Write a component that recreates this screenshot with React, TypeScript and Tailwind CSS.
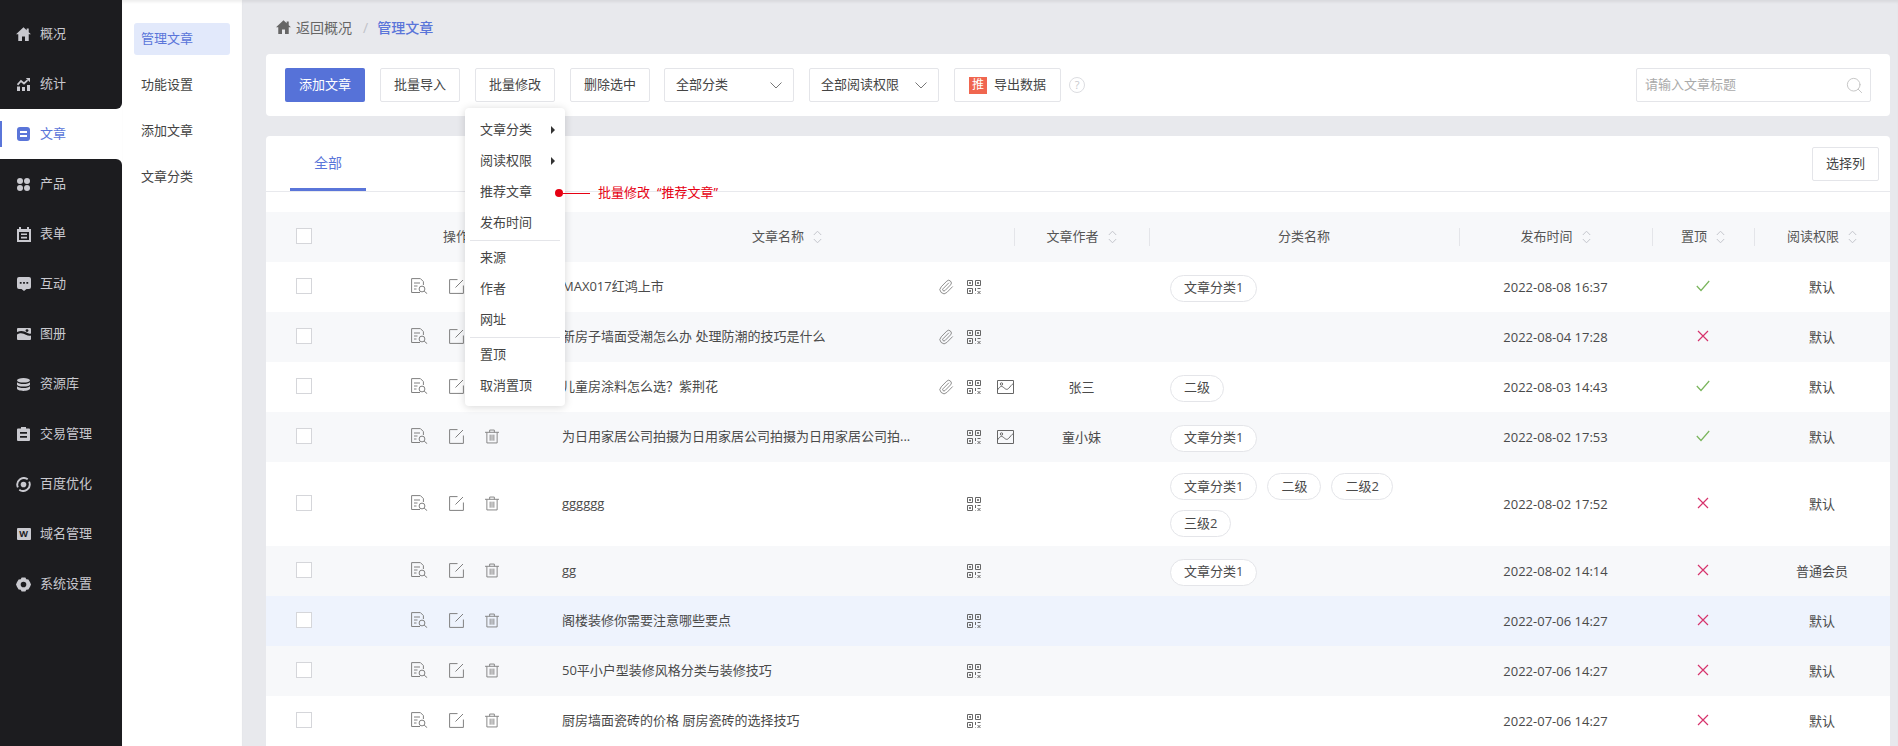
import { ReactNode } from 'react';
import { Paperclip, Search } from 'lucide-react';

const FONT = '[font-family:"Open_Sans","Noto_Sans_CJK_SC",sans-serif]';

type Row = {
  name: string;
  clip?: boolean;
  pic?: boolean;
  author?: string;
  tags?: string[];
  time: string;
  top: boolean;
  perm: string;
  bg: string;
  tall?: boolean;
};

const rows: Row[] = [
  { name: 'MAX017红鸿上市', clip: true, tags: ['文章分类1'], time: '2022-08-08 16:37', top: true, perm: '默认', bg: 'bg-white' },
  { name: '新房子墙面受潮怎么办 处理防潮的技巧是什么', clip: true, time: '2022-08-04 17:28', top: false, perm: '默认', bg: 'bg-[#f7f8fa]' },
  { name: '儿童房涂料怎么选？紫荆花', clip: true, pic: true, author: '张三', tags: ['二级'], time: '2022-08-03 14:43', top: true, perm: '默认', bg: 'bg-white' },
  { name: '为日用家居公司拍摄为日用家居公司拍摄为日用家居公司拍...', pic: true, author: '童小妹', tags: ['文章分类1'], time: '2022-08-02 17:53', top: true, perm: '默认', bg: 'bg-[#f7f8fa]' },
  { name: 'gggggg', tags: ['文章分类1', '二级', '二级2', '三级2'], time: '2022-08-02 17:52', top: false, perm: '默认', bg: 'bg-white', tall: true },
  { name: 'gg', tags: ['文章分类1'], time: '2022-08-02 14:14', top: false, perm: '普通会员', bg: 'bg-[#f7f8fa]' },
  { name: '阁楼装修你需要注意哪些要点', time: '2022-07-06 14:27', top: false, perm: '默认', bg: 'bg-[#eef3fd]' },
  { name: '50平小户型装修风格分类与装修技巧', time: '2022-07-06 14:27', top: false, perm: '默认', bg: 'bg-[#f7f8fa]' },
  { name: '厨房墙面瓷砖的价格 厨房瓷砖的选择技巧', time: '2022-07-06 14:27', top: false, perm: '默认', bg: 'bg-white' },
];

const Home = ({ className }: { className?: string }) => (
  <svg viewBox="0 0 16 15" className={className} fill="currentColor">
    <path d="M8 .4 0 7.800h2.400V15h4v-4.800h3.200V15h4V7.800H16l-2.400-2.200V1.500h-2.200v2.100z" />
  </svg>
);

const navTop = [
  {
    label: '概况',
    icon: <Home className="w-[15px] h-[14px]" />,
  },
  {
    label: '统计',
    icon: (
      <svg viewBox="0 0 13 13" className="w-[13px] h-[13px]" fill="currentColor">
        <path d="M0 8.500h3V13H0zM5 9h3v4H5zM10 7h3v6h-3z" />
        <path d="M.5 6.800 4 3l3 2.500 3.600-3.300" fill="none" stroke="currentColor" strokeWidth="1.700" />
        <path d="M8.800 0H13v4.200z" />
      </svg>
    ),
  },
];

const navBottom = [
  {
    label: '产品',
    icon: (
      <svg viewBox="0 0 13 13" className="w-[13px] h-[13px]" fill="currentColor">
        <circle cx="3" cy="3" r="3" />
        <circle cx="10" cy="3" r="3" />
        <circle cx="3" cy="10" r="3" />
        <circle cx="10" cy="10" r="3" />
      </svg>
    ),
  },
  {
    label: '表单',
    icon: (
      <svg viewBox="0 0 14 15" className="w-[14px] h-[15px]" fill="currentColor">
        <path d="M2 0h2v2h6V0h2v2h2v13H0V2h2zM2 5v8h10V5zM4 6.500h6v1.600H4zM4 9.800h6v1.600H4z" fillRule="evenodd" />
      </svg>
    ),
  },
  {
    label: '互动',
    icon: (
      <svg viewBox="0 0 14 14" className="w-[14px] h-[14px]" fill="currentColor">
        <path
          d="M2 0h10a2 2 0 0 1 2 2v8a2 2 0 0 1-2 2H9.500L7 14l-2.500-2H2a2 2 0 0 1-2-2V2a2 2 0 0 1 2-2zM2.800 5v1.800h1.800V5zm3.300 0v1.800h1.800V5zm3.300 0v1.800h1.800V5z"
          fillRule="evenodd"
        />
      </svg>
    ),
  },
  {
    label: '图册',
    icon: (
      <svg viewBox="0 0 14 12" className="w-[14px] h-3" fill="currentColor">
        <path d="M1 0h12a1 1 0 0 1 1 1v4.500c-1.800.5-3 0-4.400-.9C7.500 3.200 4 2 0 4.100V1a1 1 0 0 1 1-1z" />
        <path d="M0 6.400c3.500-2.200 6.500-1 8.800.3 1.800 1 3.500 1.400 5.200.9V11a1 1 0 0 1-1 1H1a1 1 0 0 1-1-1z" />
        <circle cx="10" cy="2.600" r="1.400" fill="#1c1c1f" />
      </svg>
    ),
  },
  {
    label: '资源库',
    icon: (
      <svg viewBox="0 0 13 13" className="w-[13px] h-[13px]" fill="currentColor">
        <ellipse cx="6.500" cy="2.300" rx="6.500" ry="2.300" />
        <path d="M0 4.200c1 1.200 3.300 1.800 6.500 1.800S12 5.400 13 4.200v2.300C13 7.700 10.100 8.600 6.500 8.600S0 7.700 0 6.500z" />
        <path d="M0 8.300c1 1.200 3.300 1.800 6.500 1.800S12 9.500 13 8.300v2.300c0 1.300-2.900 2.400-6.500 2.400S0 11.900 0 10.600z" />
      </svg>
    ),
  },
  {
    label: '交易管理',
    icon: (
      <svg viewBox="0 0 13 14" className="w-[13px] h-[14px]" fill="currentColor">
        <path
          d="M4 0h5v1.500h3a1 1 0 0 1 1 1V13a1 1 0 0 1-1 1H1a1 1 0 0 1-1-1V2.500a1 1 0 0 1 1-1h3zM3 5v1.800h7V5zm0 4v1.800h7V9z"
          fillRule="evenodd"
        />
      </svg>
    ),
  },
  {
    label: '百度优化',
    icon: (
      <svg viewBox="0 0 16 16" className="w-[15px] h-[15px]" fill="none" stroke="currentColor">
        <path d="M2 11A7 7 0 0 1 12.500 2.500" strokeWidth="2" />
        <path d="M14 5A7 7 0 0 1 3.500 13.500" strokeWidth="2" />
        <circle cx="8" cy="8" r="3" fill="currentColor" strokeWidth="0" />
      </svg>
    ),
  },
  {
    label: '域名管理',
    icon: (
      <span className="w-[14px] h-3 bg-[#c9c9cf] rounded-[1px] text-[#1c1c1f] text-[9px] font-bold leading-3 text-center">
        W
      </span>
    ),
  },
  {
    label: '系统设置',
    icon: (
      <svg viewBox="0 0 16 16" className="w-[15px] h-[15px]" fill="currentColor">
        <path
          d="M6 .5h4l1 2 2.200.2 1.800 3L16 8l-1 2.300-1.800 3-2.200.2-1 2H6l-1-2-2.200-.2-1.800-3L0 8l1-2.300 1.800-3L5 2.500zM8 5a3 3 0 1 0 0 6 3 3 0 0 0 0-6z"
          fillRule="evenodd"
        />
      </svg>
    ),
  },
];

const NavItem = ({ label, icon }: { label: string; icon: ReactNode }) => (
  <div className="h-[50px] flex items-center text-[#c9c9cf] text-[13px]">
    <span className="w-10 flex justify-center pl-[7px]">{icon}</span>
    <span>{label}</span>
  </div>
);

const SortIcon = () => (
  <svg viewBox="0 0 9 14" className="w-[9px] h-[14px] text-[#c4c6cc]" fill="none" stroke="currentColor" strokeWidth="1">
    <path d="M.8 5 4.500 1.200 8.200 5M.8 9l3.700 3.800L8.200 9" />
  </svg>
);

const Chevron = () => (
  <svg viewBox="0 0 12 7" className="w-3 h-[7px] text-[#777]" fill="none" stroke="currentColor" strokeWidth="1">
    <path d="M.5.5 6 6l5.500-5.500" />
  </svg>
);

const Btn = ({ children, className }: { children: ReactNode; className?: string }) => (
  <div
    className={`h-[34px] flex items-center justify-center rounded-[2px] border border-[#e4e5e9] bg-white text-[13px] text-[#444] ${className ?? ''}`}
  >
    {children}
  </div>
);

const Select = ({ label }: { label: string }) => (
  <Btn className="w-[130px] !justify-between pl-[11px] pr-[11px]">
    <span>{label}</span>
    <Chevron />
  </Btn>
);

const Th = ({ label, className }: { label: string; className: string }) => (
  <div className={`flex items-center gap-[9px] ${className}`}>
    <span>{label}</span>
    <SortIcon />
  </div>
);

const Divider = () => <span className="absolute left-0 top-[16px] h-[18px] w-px bg-[#e4e5e9]" />;

const DocSearch = () => (
  <svg viewBox="0 0 17 16" className="w-[17px] h-4" fill="none" stroke="#808080" strokeWidth="1">
    <path d="M9 14.500H.6V.6h8.800l3 3v3.400M3 5h6M3 8h3.500M3 11h2.500" />
    <circle cx="11" cy="11" r="2.900" />
    <path d="m13.200 13.200 3 2.500" />
  </svg>
);

const EditIcon = () => (
  <svg viewBox="0 0 15 15" className="w-[15px] h-[15px]" fill="none" stroke="#808080" strokeWidth="1">
    <path d="M8.500.6H.6v13.800h13.800V6.500M14 1 6.500 8.500" />
  </svg>
);

const TrashIcon = () => (
  <svg viewBox="0 0 15 15" className="w-[14px] h-[15px]" fill="none" stroke="#808080" strokeWidth="1">
    <path d="M0 3h15M5 3V.6h5V3M2 3v11.400h11V3M5.500 5.500v6.500M7.500 5.500v6.500M9.500 5.500v6.500" />
  </svg>
);

const QrIcon = () => (
  <svg viewBox="0 0 14 14" className="w-[14px] h-[14px]" fill="none" stroke="#666" strokeWidth="1">
    <path d="M.5.500h5v5h-5zM8.500.500h5v5h-5zM.5 8.500h5v5h-5z" />
    <path d="M2.500 2.500h1v1h-1zM10.500 2.500h1v1h-1zM2.500 10.500h1v1h-1z" fill="#666" />
    <path d="M8.500 8v3M8.500 13.500v.5M10.500 8.500h3M10.500 11l3 3M13.500 11l-3 3" />
  </svg>
);

const ImgIcon = () => (
  <svg viewBox="0 0 17 14" className="w-[17px] h-[14px]" fill="none" stroke="#666" strokeWidth="1">
    <path d="M.5.500h16v13H.5z" />
    <path d="M.5 10c2-3 3.500-4.500 5.500-3s3.500 3.500 5.500 1.500 3-4 5-5" />
    <circle cx="4.500" cy="4" r="1.200" />
  </svg>
);

const MenuItem = ({ label, arrow }: { label: string; arrow?: boolean }) => (
  <div className="h-[31px] flex items-center justify-between pl-[15px] pr-[10px] text-[13px] text-[#444]">
    <span>{label}</span>
    {arrow && <span className="w-0 h-0 border-y-[4px] border-y-transparent border-l-[4px] border-l-[#333]" />}
  </div>
);

const MenuLine = () => <div className="mx-[5px] h-px bg-[#e4e5e9] my-[1.5px]" />;

export default function App() {
  return (
    <div className={`relative flex h-screen overflow-hidden bg-white ${FONT}`}>
      {/* main nav */}
      <div className="w-[122px] shrink-0 flex flex-col">
        <div className="h-[109px] bg-[#1c1c1f] rounded-br-[6px] pt-[9px]">
          {navTop.map((n) => (
            <NavItem key={n.label} {...n} />
          ))}
        </div>
        <div className="relative h-[50px] flex items-center text-[13px] text-[#5a75d9]">
          <span className="absolute left-0 top-[12px] h-[26px] w-[2px] bg-[#5a75d9]" />
          <span className="w-10 flex justify-center pl-[7px]">
            <span className="w-[13px] h-[14px] rounded-[3px] bg-[#5a75d9] flex flex-col justify-center gap-[2px] px-[3px]">
              <span className="h-[2px] bg-white" />
              <span className="h-[2px] bg-white" />
            </span>
          </span>
          <span>文章</span>
        </div>
        <div className="flex-1 bg-[#1c1c1f] rounded-tr-[6px]">
          {navBottom.map((n) => (
            <NavItem key={n.label} {...n} />
          ))}
        </div>
      </div>

      {/* sub nav */}
      <div className="w-[120px] shrink-0 pt-[23px] pl-[12px] flex flex-col gap-[14px] text-[13px] text-[#444] shadow-[inset_0_3px_3px_-1px_rgba(0,0,0,0.07)]">
        <div className="w-[96px] h-[32px] pl-[7px] flex items-center rounded-[3px] bg-[#e2e9fb] text-[#5a75d9]">管理文章</div>
        <div className="w-[96px] h-[32px] pl-[7px] flex items-center">功能设置</div>
        <div className="w-[96px] h-[32px] pl-[7px] flex items-center">添加文章</div>
        <div className="w-[96px] h-[32px] pl-[7px] flex items-center">文章分类</div>
      </div>

      {/* content */}
      <div className="flex-1 min-w-0 bg-[#e8e9ed] pl-[24px] pr-[8px] shadow-[inset_0_3px_3px_-1px_rgba(0,0,0,0.07)]">
        <div className="h-[54px] flex items-center text-[14px] text-[#666]">
          <Home className="w-[15px] h-[14px] ml-[10px] text-[#666]" />
          <span className="ml-[5px]">返回概况</span>
          <span className="ml-[11px] mr-[9px] text-[#c0c2c8]">/</span>
          <span className="text-[#5a75d9] font-medium">管理文章</span>
        </div>

        {/* toolbar */}
        <div className="h-[62px] bg-white rounded-[4px] flex items-center pl-[19px] pr-[19px]">
          <div className="h-[34px] w-[80px] flex items-center justify-center rounded-[2px] bg-[#5672d8] text-white text-[13px]">添加文章</div>
          <Btn className="w-[80px] ml-[15px]">批量导入</Btn>
          <Btn className="w-[80px] ml-[15px]">批量修改</Btn>
          <Btn className="w-[80px] ml-[15px]">删除选中</Btn>
          <div className="ml-[14px]">
            <Select label="全部分类" />
          </div>
          <div className="ml-[15px]">
            <Select label="全部阅读权限" />
          </div>
          <Btn className="w-[107px] ml-[15px] gap-[7px]">
            <span className="w-[18px] h-[17px] bg-[#f0664f] text-white text-[12px] flex items-center justify-center">推</span>
            <span>导出数据</span>
          </Btn>
          <span className="ml-[8px] w-4 h-4 rounded-full border border-[#dcdde1] text-[#c8c9ce] text-[11px] leading-[14px] text-center">?</span>
          <div className="ml-auto w-[235px] h-[34px] flex items-center justify-between rounded-[2px] border border-[#e4e5e9] pl-[8px] pr-[6px] text-[13px] text-[#aaa]">
            <span>请输入文章标题</span>
            <Search className="w-[19px] h-[19px] text-[#c4c4c4]" strokeWidth={1.2} />
          </div>
        </div>

        {/* table card */}
        <div className="mt-[20px] bg-white rounded-t-[4px] text-[13px] text-[#4a4a4a]">
          <div className="h-[56px] border-b border-[#e8e9ed] flex justify-between pl-[24px] pr-[11px]">
            <div className="w-[76px] h-[55px] flex items-center justify-center border-b-[3px] border-[#5a75d9] pt-[1px] text-[14px] text-[#5a75d9]">全部</div>
            <Btn className="w-[67px] mt-[11px]">选择列</Btn>
          </div>

          <div className="mt-[20px] h-[50px] bg-[#f7f8fa] flex items-center text-[#555]">
            <div className="w-[76px] flex justify-center pb-[2px]">
              <span className="w-4 h-4 border border-[#d5d6da] bg-white" />
            </div>
            <Th label="操作" className="w-[218px] pl-[101px]" />
            <Th label="文章名称" className="w-[454px] justify-center" />
            <div className="relative w-[135px] flex justify-center">
              <Divider />
              <Th label="文章作者" className="h-[50px]" />
            </div>
            <div className="relative w-[310px] h-[50px] flex items-center justify-center">
              <Divider />
              <span>分类名称</span>
            </div>
            <div className="relative w-[193px] flex justify-center">
              <Divider />
              <Th label="发布时间" className="h-[50px]" />
            </div>
            <div className="relative w-[102px] flex justify-center">
              <Divider />
              <Th label="置顶" className="h-[50px]" />
            </div>
            <div className="relative w-[136px] flex justify-center">
              <Divider />
              <Th label="阅读权限" className="h-[50px]" />
            </div>
          </div>

          {rows.map((r) => (
            <div key={r.name} className={`flex items-center ${r.bg} ${r.tall ? 'h-[84px]' : 'h-[50px]'}`}>
              <div className="w-[76px] flex justify-center pb-[2px]">
                <span className="w-4 h-4 border border-[#d5d6da] bg-white" />
              </div>
              <div className="w-[218px] pl-[69px] pb-[2px] flex items-center">
                <DocSearch />
                <span className="ml-[21px]">
                  <EditIcon />
                </span>
                <span className="ml-[21px]">
                  <TrashIcon />
                </span>
              </div>
              <div className="w-[454px] pl-[2px] flex items-center">
                <div className="w-[350px] whitespace-nowrap">{r.name}</div>
                <div className="w-[29px] ml-[27px] flex">{r.clip && <Paperclip className="w-4 h-4 text-[#666]" strokeWidth={1.1} />}</div>
                <div className="w-[30px]">
                  <QrIcon />
                </div>
                <div className="w-[17px]">{r.pic && <ImgIcon />}</div>
              </div>
              <div className="w-[135px] pt-[2px] text-center">{r.author}</div>
              <div className="w-[310px] pl-[21px] pt-[2px]">
                <div className="w-[280px] flex flex-wrap gap-x-[10px] gap-y-[10px]">
                  {r.tags?.map((t) => (
                    <span key={t} className="h-[27px] px-[13px] flex items-center rounded-full border border-[#e4e5e9] bg-white">
                      {t}
                    </span>
                  ))}
                </div>
              </div>
              <div className="w-[193px] pt-[2px] text-center">{r.time}</div>
              <div className="w-[102px] flex justify-center pb-[3px]">
                {r.top ? (
                  <svg viewBox="0 0 14 12" className="w-[14px] h-3" fill="none" stroke="#7ab55c" strokeWidth="1.200">
                    <path d="m.8 6 4.200 4.500L13.200 1" />
                  </svg>
                ) : (
                  <svg viewBox="0 0 12 12" className="w-3 h-3" fill="none" stroke="#d6336c" strokeWidth="1.200">
                    <path d="m1 1 10 10M11 1 1 11" />
                  </svg>
                )}
              </div>
              <div className="w-[136px] pt-[2px] text-center">{r.perm}</div>
            </div>
          ))}
        </div>
      </div>

      {/* batch edit menu */}
      <div className="absolute left-[465px] top-[108px] w-[100px] h-[298px] pt-[6px] bg-white rounded-[4px] shadow-[0_1px_8px_rgba(0,0,0,0.16)]">
        <MenuItem label="文章分类" arrow />
        <MenuItem label="阅读权限" arrow />
        <MenuItem label="推荐文章" />
        <MenuItem label="发布时间" />
        <MenuLine />
        <MenuItem label="来源" />
        <MenuItem label="作者" />
        <MenuItem label="网址" />
        <MenuLine />
        <MenuItem label="置顶" />
        <MenuItem label="取消置顶" />
      </div>

      {/* annotation */}
      <div className="absolute left-[555px] top-[184px] flex items-center h-[18px] text-[13px] text-[#e60012]">
        <span className="w-2 h-2 rounded-full bg-[#e60012]" />
        <span className="w-[27px] h-px bg-[#e60012]" />
        <span className="ml-[8px]">批量修改</span>
        <span className="ml-[7px]">“推荐文章”</span>
      </div>
    </div>
  );
}
